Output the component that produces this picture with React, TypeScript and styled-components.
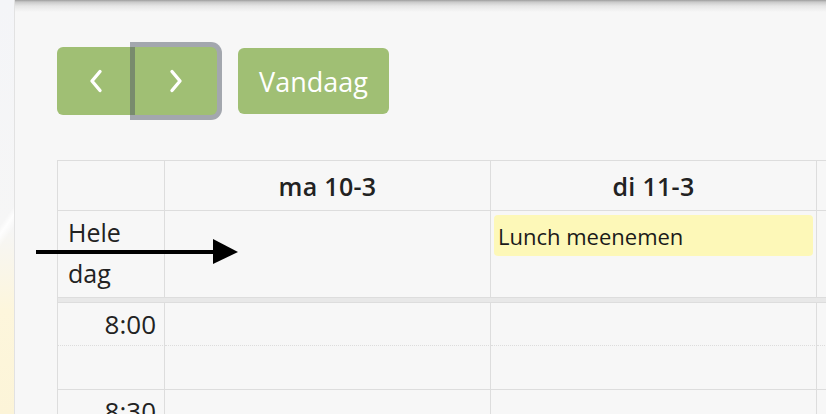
import * as React from 'react'
import styled, { createGlobalStyle } from 'styled-components'

const GlobalStyle = createGlobalStyle`
  html, body {
    margin: 0;
    padding: 0;
    background: #f7f7f7;
    font-family: "Open Sans", Lato, sans-serif;
    color: #222;
    overflow: hidden;
  }
`

const days = ['ma 10-3', 'di 11-3', '']

const slots = [
  { label: '8:00', minor: false },
  { label: '', minor: true },
  { label: '8:30', minor: false },
]

export default function App() {
  return (
    <Page>
      <GlobalStyle />
      <Sidebar />
      <Main>
        <TopShade />
        <Content>
          <Toolbar>
            <ButtonGroup>
              <NavButton $side='left' aria-label='vorige'>
                <Chevron dir='left' />
              </NavButton>
              <NavButton $side='right' $focused aria-label='volgende'>
                <Chevron dir='right' />
              </NavButton>
            </ButtonGroup>
            <TodayButton>Vandaag</TodayButton>
          </Toolbar>

          <Grid>
            <HeadCell />
            {days.map((d, i) => (
              <HeadCell key={i}>{d}</HeadCell>
            ))}

            <AllDayLabel>Hele dag</AllDayLabel>
            <AllDayCell />
            <AllDayCell>
              <Event>Lunch meenemen</Event>
            </AllDayCell>
            <AllDayCell />

            <Divider />

            {slots.map((s, i) => (
              <React.Fragment key={i}>
                <TimeCell $minor={s.minor}>{s.label}</TimeCell>
                {days.map((d, j) => (
                  <SlotCell key={j} $minor={s.minor} />
                ))}
              </React.Fragment>
            ))}
          </Grid>
        </Content>
        <Arrow />
      </Main>
    </Page>
  )
}

const Chevron = ({ dir }: { dir: 'left' | 'right' }) => (
  <svg width='16' height='26' viewBox='0 0 16 26' fill='none'>
    <path
      d={dir === 'left' ? 'M12 3.5 L4 13 L12 22.5' : 'M4 3.5 L12 13 L4 22.5'}
      stroke='#fff'
      strokeWidth='3.4'
      strokeLinecap='round'
      strokeLinejoin='round'
    />
  </svg>
)

const Arrow = () => (
  <ArrowSvg width='206' height='26' viewBox='0 0 206 26'>
    <rect x='0' y='11' width='180' height='4' fill='#000' />
    <polygon points='177,0 202,13 177,25' fill='#000' />
  </ArrowSvg>
)

const Page = styled.div`
  display: flex;
  width: 826px;
  height: 414px;
  overflow: hidden;
`

const Sidebar = styled.div`
  flex: 0 0 14px;
  border-right: 1px solid #e2e2e2;
  background:
    linear-gradient(125deg, transparent 0 52%, rgba(255, 255, 255, .9) 54%, transparent 57%),
    linear-gradient(180deg, #f4f5f8 0%, #f6f6f6 55%, #fdf6dc 75%, #fcf4d8 100%);
`

const Main = styled.div`
  position: relative;
  flex: 1;
  min-width: 0;
  overflow: hidden;
`

const TopShade = styled.div`
  height: 12px;
  background: linear-gradient(180deg, #9c9c9c 0, #c9c9c9 2px, #e6e6e6 6px, #f7f7f7 12px);
`

const Content = styled.div`
  padding: 35px 0 0 42px;
`

const Toolbar = styled.div`
  display: flex;
  align-items: center;
  gap: 21px;
`

const ButtonGroup = styled.div`
  display: flex;
`

const NavButton = styled.button<{ $side: 'left' | 'right', $focused?: boolean }>`
  position: relative;
  z-index: ${ (p) => (p.$focused ? 1 : 0) };
  display: flex;
  align-items: center;
  justify-content: center;
  width: ${ (p) => (p.$side === 'left' ? 78 : 82) }px;
  height: 68px;
  padding: 0;
  border: none;
  background: #a0bf74;
  border-radius: ${ (p) => (p.$side === 'left' ? '6px 0 0 6px' : '0 6px 6px 0') };
  box-shadow: ${ (p) => (p.$focused ? '0 0 0 5px rgba(80, 88, 102, .5)' : 'none') };
  cursor: pointer;
`

const TodayButton = styled.button`
  height: 66px;
  width: 151px;
  padding: 0;
  border: none;
  border-radius: 6px;
  background: #a0bf74;
  color: #fff;
  font-family: "Open Sans", Lato, sans-serif;
  font-size: 27px;
  cursor: pointer;
`

const Grid = styled.div`
  display: grid;
  grid-template-columns: 107px 326px 326px 326px;
  margin-top: 45px;
  border-top: 1px solid #dddddd;
  border-left: 1px solid #dddddd;
  width: max-content;
`

const cellBase = `
  border-right: 1px solid #dddddd;
  border-bottom: 1px solid #dddddd;
  box-sizing: border-box;
`

const HeadCell = styled.div`
  ${ cellBase }
  height: 50px;
  display: flex;
  align-items: center;
  justify-content: center;
  font-size: 25px;
  font-weight: 600;
  letter-spacing: .3px;
`

const AllDayLabel = styled.div`
  ${ cellBase }
  height: 87px;
  padding: 1px 8px 0 10px;
  font-size: 25px;
  line-height: 41px;
`

const AllDayCell = styled.div`
  ${ cellBase }
  height: 87px;
  padding: 4px 3px 0;
`

const Event = styled.div`
  height: 41px;
  padding: 0 4px;
  display: flex;
  align-items: center;
  background: #fdf8b8;
  border-radius: 4px;
  font-size: 22px;
  color: #1a1a1a;
`

const Divider = styled.div`
  grid-column: 1 / -1;
  height: 5px;
  background: #e8e8e8;
  border-bottom: 1px solid #dddddd;
  box-sizing: border-box;
`

const TimeCell = styled.div<{ $minor: boolean }>`
  border-right: 1px solid #dddddd;
  border-bottom: 1px ${ (p) => (p.$minor ? 'solid' : 'dotted') } #dddddd;
  box-sizing: border-box;
  height: ${ (p) => (p.$minor ? 44 : 43) }px;
  padding: 5px 8px 0 0;
  text-align: right;
  font-size: 26px;
  line-height: 32px;
`

const SlotCell = styled.div<{ $minor: boolean }>`
  border-right: 1px solid #dddddd;
  border-bottom: 1px ${ (p) => (p.$minor ? 'solid' : 'dotted') } #dddddd;
  box-sizing: border-box;
  height: ${ (p) => (p.$minor ? 44 : 43) }px;
`

const ArrowSvg = styled.svg`
  position: absolute;
  left: 21px;
  top: 239px;
`
